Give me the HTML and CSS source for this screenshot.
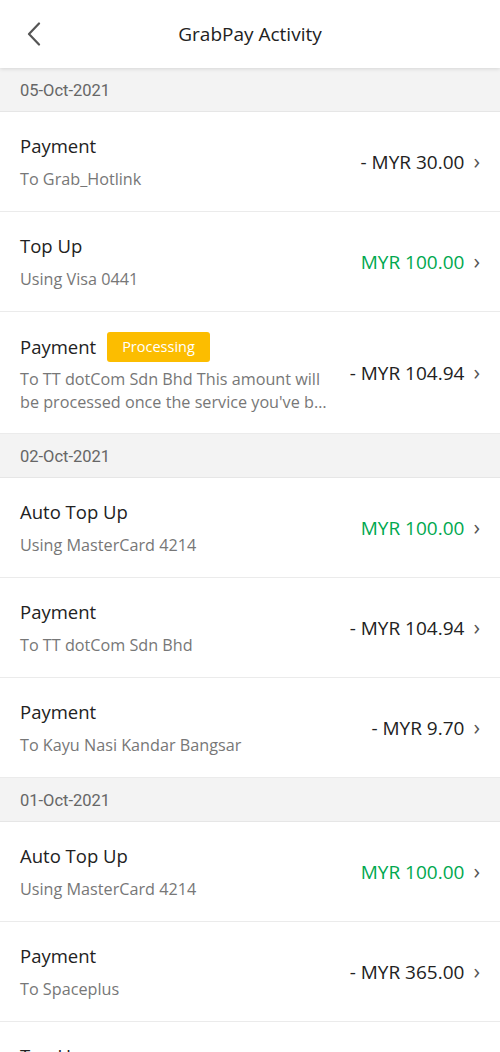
FILE: index.html
```html
<!DOCTYPE html>
<html lang="en">
  <head>
    <meta charset="UTF-8" />
    <meta name="viewport" content="width=device-width, initial-scale=1.0" />
    <title>GrabPay Activity</title>
    <link rel="stylesheet" href="styles.css">
  </head>
  <body>
    <div class="topbar">
      <button class="back">
        <svg width="16" height="24" viewBox="0 0 16 24"><path d="M13 1.5 L3 12 L13 22.5" fill="none" stroke="#555" stroke-width="2.2" stroke-linecap="round" stroke-linejoin="round"/></svg>
      </button>
      <div class="title">GrabPay Activity</div>
    </div>

    <div class="list">
      <div class="date">05-Oct-2021</div>
      <div class="item">
        <div class="info">
          <div class="name">Payment</div>
          <div class="desc">To Grab_Hotlink</div>
        </div>
        <div class="amount">- MYR 30.00</div>
        <span class="chev">&#8250;</span>
      </div>
      <div class="item">
        <div class="info">
          <div class="name">Top Up</div>
          <div class="desc">Using Visa 0441</div>
        </div>
        <div class="amount green">MYR 100.00</div>
        <span class="chev">&#8250;</span>
      </div>
      <div class="item tall">
        <div class="info">
          <div class="name">Payment <span class="badge">Processing</span></div>
          <div class="desc clamp">To TT dotCom Sdn Bhd This amount will be processed once the service you've b&hellip;</div>
        </div>
        <div class="amount">- MYR 104.94</div>
        <span class="chev">&#8250;</span>
      </div>

      <div class="date">02-Oct-2021</div>
      <div class="item">
        <div class="info">
          <div class="name">Auto Top Up</div>
          <div class="desc">Using MasterCard 4214</div>
        </div>
        <div class="amount green">MYR 100.00</div>
        <span class="chev">&#8250;</span>
      </div>
      <div class="item">
        <div class="info">
          <div class="name">Payment</div>
          <div class="desc">To TT dotCom Sdn Bhd</div>
        </div>
        <div class="amount">- MYR 104.94</div>
        <span class="chev">&#8250;</span>
      </div>
      <div class="item">
        <div class="info">
          <div class="name">Payment</div>
          <div class="desc">To Kayu Nasi Kandar Bangsar</div>
        </div>
        <div class="amount">- MYR 9.70</div>
        <span class="chev">&#8250;</span>
      </div>

      <div class="date">01-Oct-2021</div>
      <div class="item">
        <div class="info">
          <div class="name">Auto Top Up</div>
          <div class="desc">Using MasterCard 4214</div>
        </div>
        <div class="amount green">MYR 100.00</div>
        <span class="chev">&#8250;</span>
      </div>
      <div class="item">
        <div class="info">
          <div class="name">Payment</div>
          <div class="desc">To Spaceplus</div>
        </div>
        <div class="amount">- MYR 365.00</div>
        <span class="chev">&#8250;</span>
      </div>
      <div class="item">
        <div class="info">
          <div class="name">Top Up</div>
          <div class="desc">Using Visa 0441</div>
        </div>
        <div class="amount green">MYR 100.00</div>
        <span class="chev">&#8250;</span>
      </div>
    </div>
  </body>
</html>
```

FILE: styles.css
```css
body {
  margin: 0;
  font-family: "Open Sans", "Noto Sans", sans-serif;
  background: #fff;
  color: #222;
  height: 1052px;
  overflow: hidden;
}
.topbar {
  position: relative;
  height: 68px;
  display: flex;
  align-items: center;
  justify-content: center;
  background: #fff;
  box-shadow: 0 1px 4px rgba(0, 0, 0, 0.12);
  z-index: 1;
}
.back {
  position: absolute;
  left: 22px;
  top: 22px;
  padding: 0;
  border: none;
  background: transparent;
  width: 24px;
  height: 26px;
}
.title {
  font-size: 19px;
  color: #222;
  margin-top: -1px;
}
.date {
  height: 44px;
  box-sizing: border-box;
  background: #f3f3f3;
  border-bottom: 1px solid #e6e6e6;
  padding-left: 20px;
  padding-top: 2px;
  display: flex;
  align-items: center;
  font-family: Roboto, "Liberation Sans", sans-serif;
  font-size: 16.5px;
  color: #666;
}
.item {
  height: 100px;
  box-sizing: border-box;
  border-bottom: 1px solid #ebebeb;
  display: flex;
  align-items: center;
  padding: 0 20px;
}
.item.tall {
  height: 122px;
}
.item:last-child {
  border-bottom: none;
}
.info {
  flex: 1;
  min-width: 0;
}
.name {
  font-size: 18.5px;
  color: #222;
  line-height: 26px;
  display: flex;
  align-items: center;
}
.desc {
  font-size: 16.2px;
  color: #777;
  line-height: 23px;
  margin-top: 9px;
}
.clamp {
  margin-top: 6px;
  width: 312px;
}
.badge {
  margin-left: 11px;
  background: #fcbd00;
  color: #fff;
  font-size: 14.5px;
  line-height: 30px;
  padding: 0 15px;
  border-radius: 3px;
}
.amount {
  font-size: 19px;
  color: #222;
  white-space: nowrap;
}
.amount.green {
  color: #00a84f;
}
.chev {
  margin-left: 9px;
  font-size: 22px;
  color: #555;
  line-height: 1;
  margin-top: -3px;
}
```
